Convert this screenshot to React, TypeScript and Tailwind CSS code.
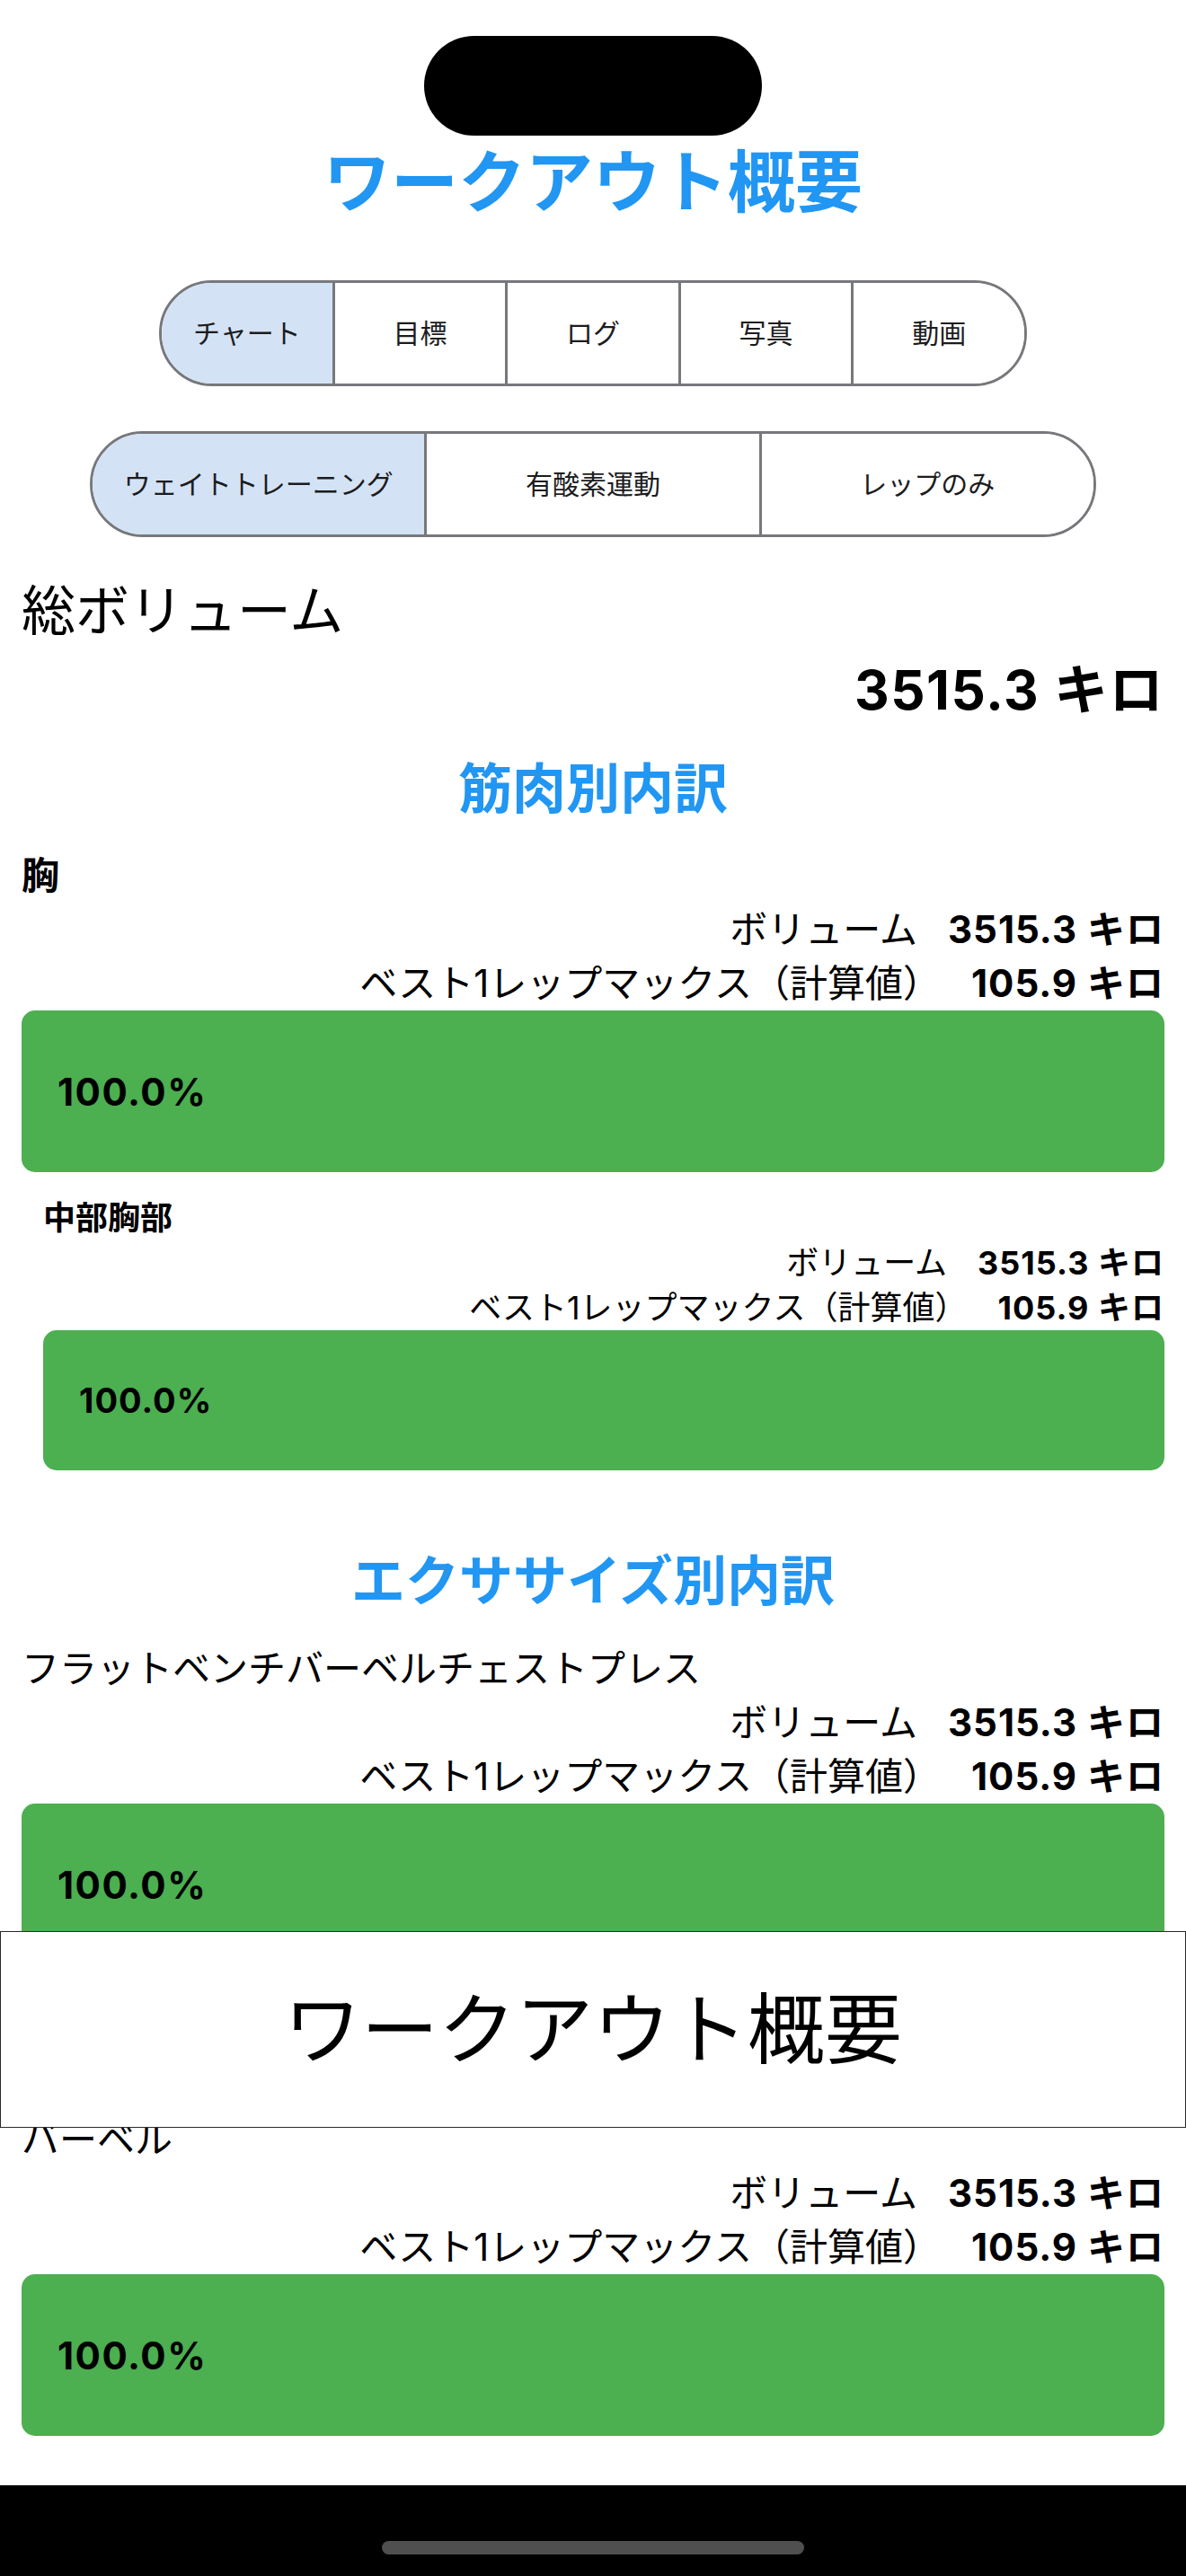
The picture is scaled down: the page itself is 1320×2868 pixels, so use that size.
import React from "react";

const FONT = "font-['Inter','Noto_Sans_CJK_JP',sans-serif]";

function Segmented({ items, width }: { items: string[]; width: string }) {
  return (
    <div
      className={`${width} mx-auto flex h-[118px] overflow-hidden rounded-full border-[3px] border-[#77787c]`}
    >
      {items.map((it, i) => (
        <div
          key={it}
          className={`flex flex-1 items-center justify-center text-[30px] text-[#1c1c1e] ${
            i === 0 ? "bg-[#d3e3f5]" : "border-l-[3px] border-[#77787c] bg-white"
          }`}
        >
          {it}
        </div>
      ))}
    </div>
  );
}

function Row({ label, value, sub }: { label: string; value: string; sub?: boolean }) {
  return (
    <div
      className={`flex items-center justify-end gap-[34px] text-black ${
        sub ? "text-[36px] leading-[50px]" : "text-[42px] leading-[60px]"
      }`}
    >
      <span>{label}</span>
      <span className="font-bold tracking-[1px]">{value}</span>
    </div>
  );
}

function Bar({ sub }: { sub?: boolean }) {
  return (
    <div
      className={`flex items-center rounded-[15px] bg-[#4caf50] pl-[40px] font-bold text-black ${
        sub ? "h-[156px] text-[38px] tracking-[1px]" : "h-[180px] text-[42px] tracking-[1.5px]"
      }`}
    >
      100.0%
    </div>
  );
}

function Stats({ sub }: { sub?: boolean }) {
  return (
    <>
      <Row label="ボリューム" value="3515.3 キロ" sub={sub} />
      <Row label="ベスト1レップマックス（計算値）" value="105.9 キロ" sub={sub} />
      <Bar sub={sub} />
    </>
  );
}

export default function App() {
  return (
    <div className={`${FONT} relative flex h-[2868px] w-[1320px] flex-col overflow-hidden bg-white`}>
      {/* dynamic island */}
      <div className="mx-auto mt-[40px] h-[111px] w-[376px] shrink-0 rounded-full bg-black" />

      <h1 className="mt-[9px] text-center text-[75px] font-bold leading-[86px] text-[#2196f3]">
        ワークアウト概要
      </h1>

      <div className="mt-[66px]">
        <Segmented items={["チャート", "目標", "ログ", "写真", "動画"]} width="w-[966px]" />
      </div>
      <div className="mt-[50px]">
        <Segmented items={["ウェイトトレーニング", "有酸素運動", "レップのみ"]} width="w-[1120px]" />
      </div>

      <div className="px-[24px]">
        <div className="mt-[52px] text-[60px] leading-[60px] text-black">総ボリューム</div>
        <div className="mt-[28px] text-right text-[60px] font-bold leading-[60px] tracking-[1.5px] text-black">
          3515.3 キロ
        </div>

        <h2 className="mt-[40px] text-center text-[60px] font-bold leading-[80px] text-[#2196f3]">
          筋肉別内訳
        </h2>

        <div className="mt-[27px]">
          <div className="text-[42px] font-semibold leading-[60px] text-black">胸</div>
          <Stats />
          <div className="ml-[24px] mt-[26px]">
            <div className="text-[36px] font-semibold leading-[50px] text-black">中部胸部</div>
            <Stats sub />
          </div>
        </div>

        <h2 className="mt-[83px] text-center text-[60px] font-bold leading-[80px] text-[#2196f3]">
          エクササイズ別内訳
        </h2>

        <div className="mt-[28px]">
          <div className="text-[42px] leading-[60px] text-black">フラットベンチバーベルチェストプレス</div>
          <Stats />
        </div>

        <div className="mt-[164px]">
          <div className="text-[42px] leading-[60px] text-black">バーベル</div>
          <Stats />
        </div>
      </div>

      {/* bottom home indicator area */}
      <div className="mt-auto flex h-[101px] shrink-0 justify-center bg-black pt-[62px]">
        <div className="h-[15px] w-[470px] rounded-full bg-[#4f4f4f]" />
      </div>

      {/* floating header overlay */}
      <div className="absolute left-0 right-0 top-[2150px] flex h-[219px] items-center justify-center border border-[#2a2a2a] bg-white text-[86px] leading-[100px] text-black">
        ワークアウト概要
      </div>
    </div>
  );
}
